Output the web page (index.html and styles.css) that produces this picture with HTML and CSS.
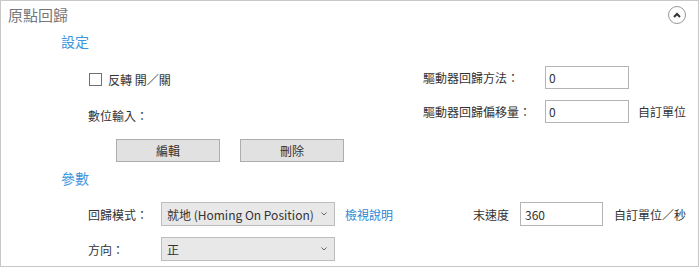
FILE: index.html
```html
<!DOCTYPE html>
<html lang="zh-Hant">
<head>
    <meta charset="UTF-8">
    <title>原點回歸</title>
    <link rel="stylesheet" href="styles.css">
</head>
<body>
    <div class="panel">
        <div class="panel-header">
            <span class="panel-title">原點回歸</span>
            <span class="collapse-btn">
                <svg width="8" height="6" viewBox="0 0 8 6"><path d="M1 5 L4 2 L7 5" fill="none" stroke="#333" stroke-width="2"/></svg>
            </span>
        </div>

        <div class="section-title">設定</div>
        <div class="settings">
            <div class="settings-left">
                <label class="check-row">
                    <input type="checkbox" class="check">
                    <span>反轉 開／關</span>
                </label>
                <div class="digital-row">數位輸入：</div>
                <div class="btn-row">
                    <button class="btn">編輯</button>
                    <button class="btn">刪除</button>
                </div>
            </div>
            <div class="settings-right">
                <div class="field">
                    <span class="field-label">驅動器回歸方法：</span>
                    <input type="text" class="text-input" value="0">
                </div>
                <div class="field">
                    <span class="field-label">驅動器回歸偏移量：</span>
                    <input type="text" class="text-input" value="0">
                    <span class="unit">自訂單位</span>
                </div>
            </div>
        </div>

        <div class="section-title">參數</div>
        <div class="params">
            <div class="param-row">
                <span class="param-label">回歸模式：</span>
                <div class="select">
                    <span>就地 (Homing On Position)</span>
                    <svg width="6" height="4" viewBox="0 0 6 4"><path d="M0.5 0.5 L3 3 L5.5 0.5" fill="none" stroke="#666" stroke-width="1"/></svg>
                </div>
                <a class="help-link">檢視說明</a>
                <span class="speed-label">末速度</span>
                <input type="text" class="text-input speed-input" value="360">
                <span class="speed-unit">自訂單位／秒</span>
            </div>
            <div class="param-row">
                <span class="param-label">方向：</span>
                <div class="select">
                    <span>正</span>
                    <svg width="6" height="4" viewBox="0 0 6 4"><path d="M0.5 0.5 L3 3 L5.5 0.5" fill="none" stroke="#666" stroke-width="1"/></svg>
                </div>
            </div>
        </div>
    </div>
</body>
</html>
```
FILE: styles.css
```css
* {
    margin: 0;
    padding: 0;
    box-sizing: border-box;
}

body {
    font-family: "Noto Sans CJK TC", "Noto Sans", sans-serif;
    font-size: 12px;
    color: #333;
    background-color: #fff;
}

.panel {
    width: 699px;
    height: 267px;
    border: 1px solid #c8c8c8;
}

.panel-header {
    display: flex;
    align-items: center;
    justify-content: space-between;
    height: 24px;
    padding: 4px 12px 0 7px;
}

.panel-title {
    font-size: 15px;
    line-height: 20px;
    color: #777;
}

.collapse-btn {
    width: 18px;
    height: 18px;
    border: 1px solid #999;
    border-radius: 50%;
    display: flex;
    align-items: center;
    justify-content: center;
}

.section-title {
    margin-top: 6px;
    padding-left: 60px;
    font-size: 14px;
    line-height: 20px;
    color: #3d95de;
}

/* 設定 */
.settings {
    display: flex;
    margin-top: 13px;
    padding-left: 87px;
}

.settings-left {
    width: 335px;
}

.check-row {
    display: flex;
    align-items: center;
    height: 24px;
    margin-top: 3px;
    padding-left: 1px;
}

.check {
    appearance: none;
    width: 13px;
    height: 13px;
    border: 1px solid #707070;
    background-color: #fff;
    margin-right: 6px;
}

.digital-row {
    height: 24px;
    line-height: 24px;
    margin-top: 13px;
}

.btn-row {
    display: flex;
    gap: 20px;
    margin-top: 11px;
    padding-left: 28px;
}

.btn {
    width: 104px;
    height: 23px;
    background-color: #e1e1e1;
    border: 1px solid #adadad;
    font-family: inherit;
    font-size: 12px;
    color: #333;
}

.settings-right {
    padding-top: 2px;
}

.field {
    display: flex;
    align-items: center;
    height: 23px;
    margin-bottom: 11px;
}

.field-label {
    width: 122px;
}

.text-input {
    width: 84px;
    height: 23px;
    border: 1px solid #b4b4b4;
    padding-left: 3px;
    font-family: inherit;
    font-size: 12px;
    color: #333;
    outline: none;
}

.unit {
    margin-left: 9px;
}

/* 參數 */
.params {
    margin-top: 14px;
    padding-left: 87px;
}

.param-row {
    display: flex;
    align-items: center;
    height: 24px;
    margin-bottom: 11px;
}

.param-label {
    width: 73px;
}

.select {
    width: 174px;
    height: 24px;
    display: flex;
    align-items: center;
    justify-content: space-between;
    padding: 0 7px 0 5px;
    background-color: #e8e8e8;
    border: 1px solid #bdbdbd;
}

.help-link {
    width: 138px;
    padding-left: 10px;
    color: #2f84d2;
    cursor: pointer;
}

.speed-label {
    width: 47px;
}

.speed-input {
    width: 83px;
    height: 24px;
    padding-left: 4px;
}

.speed-unit {
    margin-left: 11px;
}
```
